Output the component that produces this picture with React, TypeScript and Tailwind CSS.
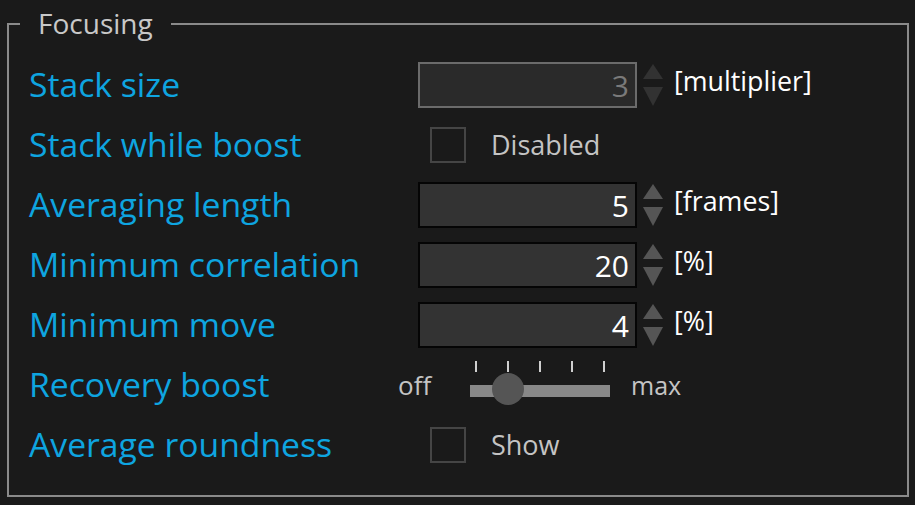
import React from "react";

const font = { fontFamily: '"Open Sans", "Noto Sans", sans-serif' };

function Spinner({ disabled }: { disabled?: boolean }) {
  const c = disabled ? "#323232" : "#555555";
  return (
    <svg width="20" height="42" viewBox="0 0 20 42" className="ml-[6px]">
      <polygon points="10,0 20,15 0,15" fill={c} />
      <polygon points="0,23 20,23 10,42" fill={c} />
    </svg>
  );
}

function NumberField({ value, unit, disabled }: { value: string; unit: string; disabled?: boolean }) {
  return (
    <div className="flex items-center ml-[20px]">
      <div
        className={
          disabled
            ? "w-[219px] h-[46px] border-2 border-[#6b6b6b] bg-[#2a2a2a] flex items-center justify-end pr-[6px] text-[30px] text-[#7a7a7a]"
            : "w-[219px] h-[46px] border-2 border-[#050505] bg-[#333333] flex items-center justify-end pr-[6px] text-[30px] text-white"
        }
      >
        {value}
      </div>
      <Spinner disabled={disabled} />
      <span className="ml-[11px] text-[26.8px] text-white leading-none -mt-[8px]">{unit}</span>
    </div>
  );
}

function Check({ label }: { label: string }) {
  return (
    <div className="flex items-center ml-[32px]">
      <div className="w-[36px] h-[36px] border-2 border-[#454545]" />
      <span className="ml-[25px] text-[27px] text-[#c4c4c4]">{label}</span>
    </div>
  );
}

function Slider() {
  return (
    <div className="flex items-center">
      <span className="text-[26px] text-[#c4c4c4] w-[72px] leading-none">off</span>
      <div className="relative w-[140px] h-[60px]">
        <div className="absolute left-0 right-0 top-[30px] h-[12px] bg-[#888888]" />
        {[6, 38, 70, 102, 134].map((x) => (
          <div key={x} className="absolute top-[6px] w-[2px] h-[11px] bg-[#cfcfcf]" style={{ left: x - 1 }} />
        ))}
        <div className="absolute left-[22px] top-[18px] w-[32px] h-[32px] rounded-full bg-[#555555]" />
      </div>
      <span className="ml-[21px] text-[25px] text-[#c4c4c4] leading-none">max</span>
    </div>
  );
}

const rows: { label: string; control: React.ReactNode }[] = [
  { label: "Stack size", control: <NumberField value="3" unit="[multiplier]" disabled /> },
  { label: "Stack while boost", control: <Check label="Disabled" /> },
  { label: "Averaging length", control: <NumberField value="5" unit="[frames]" /> },
  { label: "Minimum correlation", control: <NumberField value="20" unit="[%]" /> },
  { label: "Minimum move", control: <NumberField value="4" unit="[%]" /> },
  { label: "Recovery boost", control: <Slider /> },
  { label: "Average roundness", control: <Check label="Show" /> },
];

export default function App() {
  return (
    <div className="w-[915px] h-[505px] bg-[#1a1a1a] overflow-hidden pt-[23px] pl-[7px]" style={font}>
      <div className="relative w-[902px] h-[474px] border-2 border-[#8a8a8a]">
        <div className="absolute left-[11px] -top-[20px] px-[18px] bg-[#1a1a1a] text-[28px] leading-[36px] text-[#c8c8c8]">
          Focusing
        </div>
        <div className="pt-[30px] pl-[20px]">
          {rows.map((r) => (
            <div key={r.label} className="flex items-center h-[60px]">
              <div className="w-[369px] text-[33.7px] text-[#0ea5e0] leading-none">{r.label}</div>
              {r.control}
            </div>
          ))}
        </div>
      </div>
    </div>
  );
}
